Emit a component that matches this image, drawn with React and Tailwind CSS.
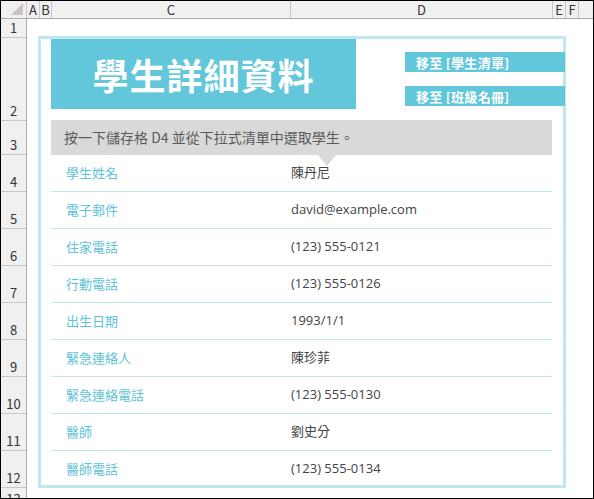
const cols = [
  { key: "A", w: "w-[13px]" },
  { key: "B", w: "w-[12px]" },
  { key: "C", w: "w-[239px]" },
  { key: "D", w: "w-[262px]" },
  { key: "E", w: "w-[13px]" },
  { key: "F", w: "w-[13px]" },
];

const rowHeads = [
  { n: 1, h: "h-[19px]" },
  { n: 2, h: "h-[83px]" },
  { n: 3, h: "h-[34px]" },
  { n: 4, h: "h-[37px]" },
  { n: 5, h: "h-[37px]" },
  { n: 6, h: "h-[37px]" },
  { n: 7, h: "h-[37px]" },
  { n: 8, h: "h-[37px]" },
  { n: 9, h: "h-[37px]" },
  { n: 10, h: "h-[37px]" },
  { n: 11, h: "h-[37px]" },
  { n: 12, h: "h-[37px]" },
];

const fields = [
  ["學生姓名", "陳丹尼"],
  ["電子郵件", "david@example.com"],
  ["住家電話", "(123) 555-0121"],
  ["行動電話", "(123) 555-0126"],
  ["出生日期", "1993/1/1"],
  ["緊急連絡人", "陳珍菲"],
  ["緊急連絡電話", "(123) 555-0130"],
  ["醫師", "劉史分"],
  ["醫師電話", "(123) 555-0134"],
];

function ColumnHeader() {
  return (
    <div className="flex h-[18px] shrink-0 border-b border-[#ababab] bg-[#f0f0f0]">
      <div className="relative w-[26px] shrink-0 border-r border-[#c8c8c8]">
        <svg className="absolute right-[3px] bottom-[3px]" width="12" height="12" viewBox="0 0 12 12">
          <polygon points="12,0 12,12 0,12" fill="#c4c4c4" />
        </svg>
      </div>
      {cols.map((c) => (
        <div
          key={c.key}
          className={`${c.w} shrink-0 border-r border-[#c8c8c8] flex items-center justify-center text-[13px] leading-none text-[#333]`}
        >
          {c.key}
        </div>
      ))}
      <div className="flex-1" />
    </div>
  );
}

function RowHeaders() {
  return (
    <div className="w-[26px] shrink-0 border-r border-[#ababab] bg-[#f0f0f0]">
      {rowHeads.map((r) => (
        <div
          key={r.n}
          className={`${r.h} border-b border-[#c8c8c8] flex items-end justify-center pb-[3px] text-[13px] leading-none text-[#333]`}
        >
          {r.n}
        </div>
      ))}
      {/* row 13 only peeks in at the bottom edge */}
      <div className="h-[37px] flex items-start justify-center pt-[4px] text-[13px] leading-none text-[#333]">
        13
      </div>
    </div>
  );
}

function NavButton({ children }) {
  return (
    <div className="h-[20px] bg-[#62c7da] pl-[11px] flex items-center text-[13px] font-bold text-white leading-none tracking-[0.3px]">
      {children}
    </div>
  );
}

function StudentForm() {
  return (
    <div className="ml-[11px] mt-[17px] w-[528px] h-[452px] border-[3px] border-[#bfe7ee] bg-white">
      <div className="flex h-[81px] pl-[10px]">
        <div className="w-[305px] h-[70px] bg-[#62c7da] flex items-center justify-center text-[36px] font-bold text-white leading-none tracking-[1px]">
          學生詳細資料
        </div>
        <div className="ml-auto mr-[-2px] w-[160px] pt-[13px] flex flex-col gap-[14px]">
          <NavButton>移至 [學生清單]</NavButton>
          <NavButton>移至 [班級名冊]</NavButton>
        </div>
      </div>

      <div className="relative ml-[10px] w-[501px] h-[35px] bg-[#d9d9d9] pl-[13px] flex items-center text-[14px] text-[#595959]">
        按一下儲存格 D4 並從下拉式清單中選取學生。
        <svg className="absolute left-[267px] top-full" width="18" height="11" viewBox="0 0 18 11">
          <polygon points="0,0 18,0 9,11" fill="#d9d9d9" />
        </svg>
      </div>

      <div className="ml-[10px] w-[501px]">
        {fields.map(([label, value], i) => (
          <div
            key={label}
            className={`flex items-center ${i < fields.length - 1 ? "h-[37px] border-b border-[#bfe7ee]" : "h-[35px]"}`}
          >
            <div className="w-[240px] pl-[15px] text-[13px] text-[#5ec3d7]">{label}</div>
            <div className="flex-1 text-[13px] text-[#444] font-['Open_Sans','Noto_Sans_CJK_TC',sans-serif]">
              {value}
            </div>
          </div>
        ))}
      </div>
    </div>
  );
}

export default function App() {
  return (
    <div className="w-[594px] h-[499px] border border-black bg-white flex flex-col overflow-hidden font-['Noto_Sans_CJK_TC','Noto_Sans',sans-serif]">
      <ColumnHeader />
      <div className="flex flex-1 min-h-0">
        <RowHeaders />
        <div className="flex-1">
          <StudentForm />
        </div>
      </div>
    </div>
  );
}
